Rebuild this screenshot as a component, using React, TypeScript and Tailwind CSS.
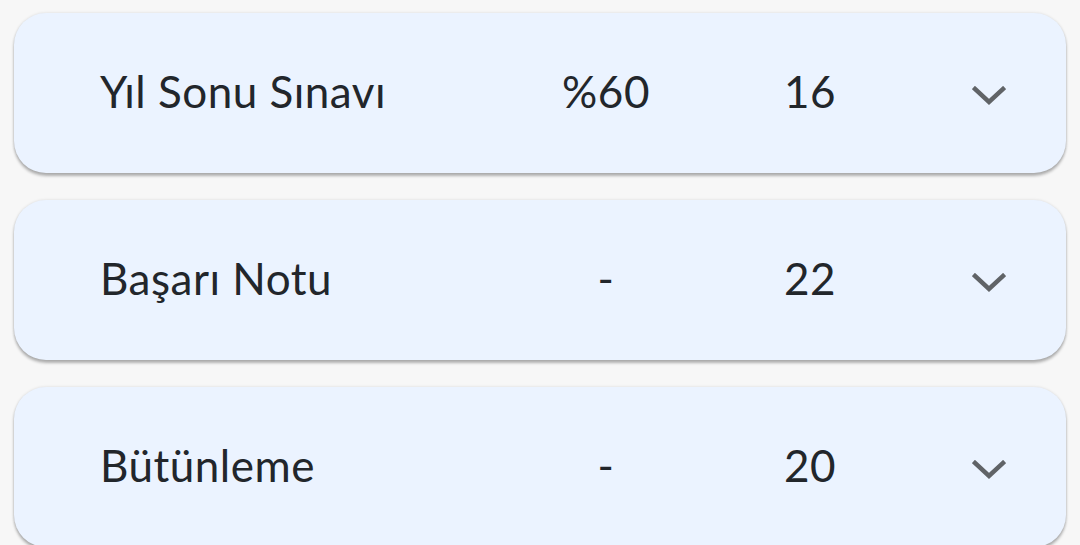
import React from 'react';

type Row = { label: string; weight: string; grade: string };

const rows: Row[] = [
  { label: 'Yıl Sonu Sınavı', weight: '%60', grade: '16' },
  { label: 'Başarı Notu', weight: '-', grade: '22' },
  { label: 'Bütünleme', weight: '-', grade: '20' },
];

function Chevron() {
  return (
    <svg width="34" height="20" viewBox="0 0 34 20" fill="none">
      <path d="M3 3 L17 16 L31 3" stroke="#606367" strokeWidth="4.5" strokeLinecap="square" />
    </svg>
  );
}

export default function App() {
  return (
    <div
      className="min-h-screen bg-[#f7f7f7] pl-[14px] pr-[14px] pt-[13px] flex flex-col gap-[27px] overflow-hidden h-[545px]"
      style={{ fontFamily: 'Lato, "Noto Sans", sans-serif' }}
    >
      {rows.map((row) => (
        <div
          key={row.label}
          className="shrink-0 h-[160px] rounded-[32px] bg-[#ebf3ff] flex items-center pl-[86px] pr-[16px] shadow-[0_3px_3px_rgba(0,0,0,0.28),0_0_3px_rgba(0,0,0,0.12)] text-[#22262b]"
        >
          <div className="w-[420px] text-[44px] leading-none tracking-[0.5px] -mt-[4px]">{row.label}</div>
          <div className="w-[172px] text-[44px] leading-none tracking-[0.5px] text-center -mt-[4px]">{row.weight}</div>
          <div className="w-[236px] text-[44px] leading-none tracking-[0.5px] text-center -mt-[4px]">{row.grade}</div>
          <div className="w-[122px] flex justify-center mt-[6px]">
            <Chevron />
          </div>
        </div>
      ))}
    </div>
  );
}
